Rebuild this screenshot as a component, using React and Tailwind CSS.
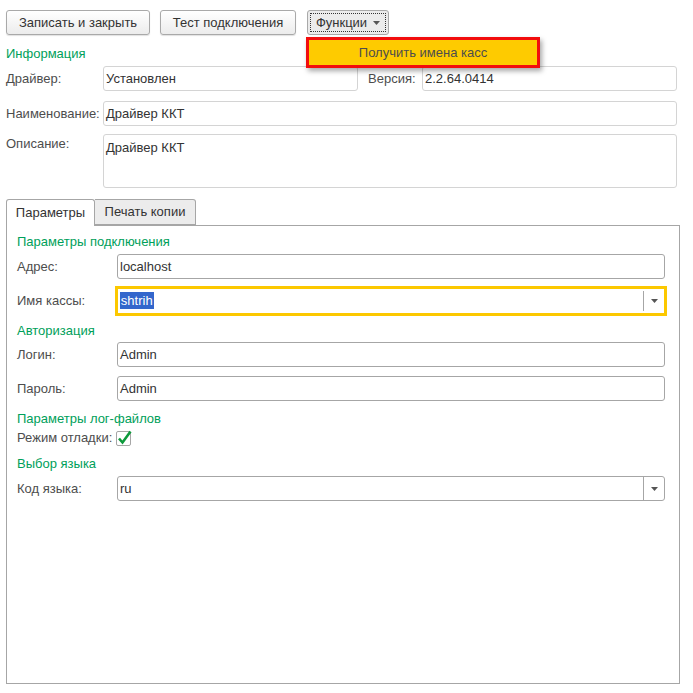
import React from "react";

const font = { fontFamily: '"Liberation Sans", Arial, sans-serif' };

function Btn({ w, children, pressed }) {
  return (
    <div
      className={`h-[25px] ${w} flex items-center justify-center rounded-[3px] border border-[#a9a9a9] text-[13px] text-[#333] ${
        pressed ? "bg-[#e4e4e4]" : "bg-gradient-to-b from-white to-[#ececec]"
      } shadow-[0_1px_1px_rgba(0,0,0,0.12)]`}
    >
      {children}
    </div>
  );
}

function Field({ w, h = "h-[25px]", value, light = true, top = false, extra = "" }) {
  return (
    <div
      className={`${w} ${h} rounded-[3px] border ${
        light ? "border-[#d4d4d4]" : "border-[#a6a6a6]"
      } bg-white flex ${top ? "items-start pt-[3px]" : "items-center"} pl-[2px] text-[13px] text-[#333] ${extra}`}
    >
      {value}
    </div>
  );
}

function Heading({ children, cls = "" }) {
  return <div className={`h-[16px] leading-[16px] text-[13px] text-[#00a05a] ${cls}`}>{children}</div>;
}

function Caret() {
  return (
    <svg width="7" height="4" viewBox="0 0 7 4">
      <path d="M0 0h7L3.5 4z" fill="#555" />
    </svg>
  );
}

export default function App() {
  return (
    <div className="w-[693px] h-[693px] bg-white relative overflow-hidden" style={font}>
      {/* Toolbar */}
      <div className="flex pt-[10px] pl-[6px]">
        <Btn w="w-[144px]">Записать и закрыть</Btn>
        <div className="w-[10px]" />
        <Btn w="w-[136px]">Тест подключения</Btn>
        <div className="w-[11px]" />
        <div className="h-[25px] w-[82px] rounded-[3px] border border-[#a9a9a9] bg-[#ebebeb] p-[2px]">
          <div className="w-full h-full border border-dotted border-[#333] flex items-center justify-center gap-[6px] text-[13px] text-[#333]">
            <span>Функции</span>
            <Caret />
          </div>
        </div>
      </div>

      {/* Info section */}
      <div className="pl-[6px] pr-[16px]">
        <Heading cls="mt-[11px]">Информация</Heading>
        <div className="flex items-center mt-[4px] h-[25px]">
          <div className="w-[97px] text-[13px] text-[#4d4d4d]">Драйвер:</div>
          <Field w="w-[255px]" value="Установлен" />
          <div className="w-[64px] pl-[10px] text-[13px] text-[#4d4d4d]">Версия:</div>
          <Field w="w-[255px]" value="2.2.64.0414" />
        </div>
        <div className="flex items-center mt-[10px] h-[25px]">
          <div className="w-[97px] text-[13px] text-[#4d4d4d]">Наименование:</div>
          <Field w="w-[574px]" value="Драйвер ККТ" />
        </div>
        <div className="flex items-start mt-[8px]">
          <div className="w-[97px] text-[13px] text-[#4d4d4d]">Описание:</div>
          <Field w="w-[574px]" h="h-[54px]" value="Драйвер ККТ" top />
        </div>
      </div>

      {/* Tabs */}
      <div className="ml-[6px] mt-[10px] w-[674px]">
        <div className="flex h-[27px] items-end">
          <div className="h-[27px] w-[89px] border border-b-0 border-[#a6a6a6] rounded-t-[3px] bg-white flex items-center justify-center text-[13px] text-[#333] relative z-10 translate-y-[1px]">
            Параметры
          </div>
          <div className="h-[26px] w-[101px] border border-l-0 border-[#a6a6a6] rounded-tr-[3px] bg-[#ececec] flex items-center justify-center text-[13px] text-[#333]">
            Печать копии
          </div>
        </div>
        <div className="h-[459px] border border-[#a6a6a6] pl-[10px] pr-[14px] pt-[8px]">
          <Heading>Параметры подключения</Heading>
          <div className="flex items-center mt-[4px] h-[25px]">
            <div className="w-[100px] text-[13px] text-[#4d4d4d]">Адрес:</div>
            <Field w="w-[548px]" value="localhost" light={false} />
          </div>
          <div className="flex items-center mt-[9px] h-[26px]">
            <div className="w-[100px] text-[13px] text-[#4d4d4d]">Имя кассы:</div>
            <div className="w-[549px] h-[26px] bg-white outline-2 outline-[#fcc800] border border-[#fcc800] flex items-center text-[13px]">
              <div className="flex-1 pl-[2px]">
                <span className="bg-[#3366cc] text-white px-[1px] py-[1px]">shtrih</span>
              </div>
              <div className="w-[21px] h-[20px] border-l border-[#a6a6a6] flex items-center justify-center">
                <Caret />
              </div>
            </div>
          </div>
          <Heading cls="mt-[9px]">Авторизация</Heading>
          <div className="flex items-center mt-[3px] h-[25px]">
            <div className="w-[100px] text-[13px] text-[#4d4d4d]">Логин:</div>
            <Field w="w-[548px]" value="Admin" light={false} />
          </div>
          <div className="flex items-center mt-[9px] h-[25px]">
            <div className="w-[100px] text-[13px] text-[#4d4d4d]">Пароль:</div>
            <Field w="w-[548px]" value="Admin" light={false} />
          </div>
          <Heading cls="mt-[10px]">Параметры лог-файлов</Heading>
          <div className="flex items-center mt-[2px] h-[18px]">
            <div className="text-[13px] text-[#4d4d4d] mr-[4px]">Режим отладки:</div>
            <div className="w-[15px] h-[15px] border border-[#a6a6a6] rounded-[2px] bg-white relative">
              <svg className="absolute -left-[1px] -top-[3px]" width="17" height="17" viewBox="0 0 17 17">
                <path d="M3 9.5l3.5 4L14.5 2.5" fill="none" stroke="#0e9a3c" strokeWidth="2.6" />
              </svg>
            </div>
          </div>
          <Heading cls="mt-[9px]">Выбор языка</Heading>
          <div className="flex items-center mt-[4px] h-[25px]">
            <div className="w-[100px] text-[13px] text-[#4d4d4d]">Код языка:</div>
            <div className="w-[548px] h-[25px] rounded-[3px] border border-[#a6a6a6] bg-white flex items-center text-[13px] text-[#333]">
              <div className="flex-1 pl-[2px]">ru</div>
              <div className="w-[21px] h-full border-l border-[#a6a6a6] flex items-center justify-center">
                <Caret />
              </div>
            </div>
          </div>
        </div>
      </div>

      {/* Dropdown menu */}
      <div className="absolute left-[306px] top-[37px] w-[234px] h-[31px] bg-[#fecb00] border-[3px] border-[#f20d0d] shadow-[2px_3px_5px_rgba(0,0,0,0.35)] flex items-center justify-center text-[13px] text-[#4d4d4d]">
        Получить имена касс
      </div>
    </div>
  );
}
